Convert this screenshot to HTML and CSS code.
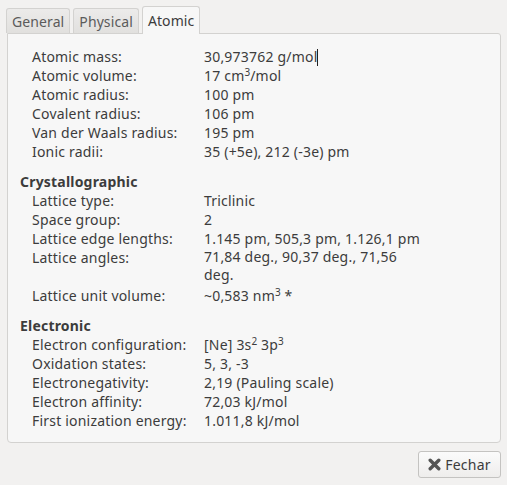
FILE: index.html
```html
<!DOCTYPE html>
<html>
<head>
<meta charset="utf-8">
<link rel="stylesheet" href="styles.css">
</head>
<body>
<div class="window">
  <div class="tabs">
    <div class="tab">General</div>
    <div class="tab">Physical</div>
    <div class="tab active">Atomic</div>
  </div>
  <div class="panel">
    <div class="grid">
      <div class="label">Atomic mass:</div><div class="value">30,973762 g/mol<span class="caret"></span></div>
      <div class="label">Atomic volume:</div><div class="value">17 cm<sup>3</sup>/mol</div>
      <div class="label">Atomic radius:</div><div class="value">100 pm</div>
      <div class="label">Covalent radius:</div><div class="value">106 pm</div>
      <div class="label">Van der Waals radius:</div><div class="value">195 pm</div>
      <div class="label">Ionic radii:</div><div class="value">35 (+5e), 212 (-3e) pm</div>
    </div>
    <div class="section">Crystallographic</div>
    <div class="grid">
      <div class="label">Lattice type:</div><div class="value">Triclinic</div>
      <div class="label">Space group:</div><div class="value">2</div>
      <div class="label">Lattice edge lengths:</div><div class="value">1.145 pm, 505,3 pm, 1.126,1 pm</div>
      <div class="label">Lattice angles:</div><div class="value wrap">71,84 deg., 90,37 deg., 71,56 deg.</div>
      <div class="label">Lattice unit volume:</div><div class="value">~0,583 nm<sup>3</sup> *</div>
    </div>
    <div class="section">Electronic</div>
    <div class="grid">
      <div class="label">Electron configuration:</div><div class="value">[Ne] 3s<sup>2</sup> 3p<sup>3</sup></div>
      <div class="label">Oxidation states:</div><div class="value">5, 3, -3</div>
      <div class="label">Electronegativity:</div><div class="value">2,19 (Pauling scale)</div>
      <div class="label">Electron affinity:</div><div class="value">72,03 kJ/mol</div>
      <div class="label">First ionization energy:</div><div class="value">1.011,8 kJ/mol</div>
    </div>
  </div>
  <div class="footer">
    <button class="btn"><svg class="x" width="13" height="13" viewBox="0 0 13 13"><path d="M2.2 2.2 L10.8 10.8 M10.8 2.2 L2.2 10.8" stroke="#555" stroke-width="3.4" stroke-linecap="round"/></svg>Fechar</button>
  </div>
</div>
</body>
</html>
```
FILE: styles.css
```css
html, body {
  margin: 0;
  padding: 0;
  background: #f2f1f0;
}
body {
  font-family: "Noto Sans", "Open Sans", sans-serif;
  font-size: 14px;
  letter-spacing: 0.2px;
  color: #3c3c3c;
  width: 507px;
  height: 485px;
  overflow: hidden;
}
.window {
  padding: 6px 6px 0 7px;
}
.tabs {
  display: flex;
  align-items: flex-end;
  height: 27px;
  gap: 3px;
  margin-left: -1px;
  position: relative;
  z-index: 1;
}
.tab {
  height: 25px;
  box-sizing: border-box;
  padding: 0 5px;
  line-height: 25px;
  letter-spacing: 0.1px;
  border: 1px solid #d3d2d0;
  border-bottom: none;
  border-radius: 3px 3px 0 0;
  background: linear-gradient(#ecebea, #e1e0de);
  color: #5b5b5b;
}
.tab.active {
  height: 28px;
  margin-bottom: -1px;
  line-height: 28px;
  background: #f7f7f7;
  color: #3c3c3c;
}
.panel {
  width: 494px;
  height: 410px;
  box-sizing: border-box;
  border: 1px solid #d3d2d0;
  border-radius: 0 3px 4px 4px;
  background: #f7f7f7;
  padding: 13px 0 0 12px;
}
.grid {
  display: grid;
  grid-template-columns: 172px 290px;
  padding-left: 12px;
  line-height: 19px;
}
.value.wrap {
  max-width: 216px;
  line-height: 18px;
  padding-bottom: 2px;
}
.section {
  font-weight: bold;
  margin-top: 11px;
  line-height: 19px;
}
sup {
  font-size: 10px;
  line-height: 1;
  vertical-align: baseline;
  position: relative;
  top: -5px;
  letter-spacing: 0;
}
.caret {
  display: inline-block;
  width: 1px;
  height: 17px;
  background: #222;
  vertical-align: -4px;
}
.footer {
  display: flex;
  justify-content: flex-end;
  padding: 8px 0 0 0;
}
.btn {
  font-family: inherit;
  font-size: 14px;
  letter-spacing: 0.2px;
  color: #3c3c3c;
  height: 27px;
  width: 83px;
  display: flex;
  align-items: center;
  justify-content: center;
  gap: 4px;
  border: 1px solid #c4c3c1;
  border-radius: 3px;
  background: linear-gradient(#fbfbfb, #eeedec);
  padding: 0 6px;
  margin-right: 0;
}
```
